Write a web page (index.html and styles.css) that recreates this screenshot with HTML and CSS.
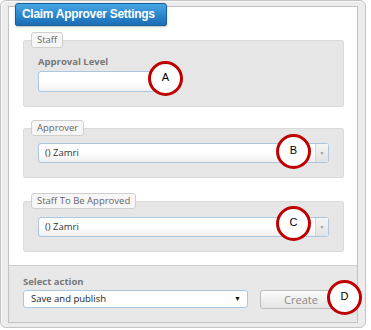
FILE: index.html
```html
<!DOCTYPE html>
<html>
<head>
<meta charset="utf-8">
<title>Claim Approver Settings</title>
<link rel="stylesheet" href="styles.css">
</head>
<body>
<div class="window">
	<div class="panel">
		<div class="tab">Claim Approver Settings</div>
		<div class="content">
			<fieldset class="group">
				<legend>Staff</legend>
				<div class="label">Approval Level</div>
				<div class="text-input"></div>
			</fieldset>
			<fieldset class="group gap">
				<legend>Approver</legend>
				<div class="combo"><span class="value">() Zamri</span><span class="drop">&#9660;</span></div>
			</fieldset>
			<fieldset class="group gap2">
				<legend>Staff To Be Approved</legend>
				<div class="combo"><span class="value">() Zamri</span><span class="drop">&#9660;</span></div>
			</fieldset>
		</div>
		<div class="footer">
			<div class="label">Select action</div>
			<div class="actions">
				<div class="select"><span>Save and publish</span><span class="arrow">&#9660;</span></div>
				<div class="button">Create</div>
			</div>
		</div>
	</div>
	<div class="mark mark-a">A</div>
	<div class="mark mark-b">B</div>
	<div class="mark mark-c">C</div>
	<div class="mark mark-d">D</div>
</div>
</body>
</html>
```

FILE: styles.css
```css
*{margin:0;padding:0;box-sizing:border-box;}
body{background:#fff;font-family:"Open Sans","Liberation Sans",sans-serif;}
.window{position:relative;width:366px;height:328px;background:#ececec;border:1px solid #c4c4c4;
	border-radius:6px;padding:5px 0 0 7px;box-shadow:inset 1px 1px 0 #fafafa;}
.panel{width:350px;height:317px;background:#fff;border:1px solid #c2c2c2;display:flex;flex-direction:column;}
.tab{align-self:flex-start;margin:-4px 0 0 6px;width:152px;height:23px;border:1px solid #1d5f98;border-radius:3px 3px 2px 2px;
	background:linear-gradient(#48a6e4,#2a86cc 55%,#1c6db4);color:#fff;font-family:"Liberation Sans",sans-serif;
	font-weight:bold;font-size:12px;letter-spacing:-0.3px;line-height:21px;padding-left:6px;white-space:nowrap;overflow:hidden;
	box-shadow:0 1px 2px rgba(0,0,0,0.25);}
.content{flex:1;}
.group{margin:6px 13px 0 14px;padding:0 14px 14px;border:1px solid #dadada;border-radius:3px;background:#e6e6e6;}
.group.gap{margin-top:13px;}
.group.gap2{margin-top:15px;}
.group legend{margin-left:-7px;height:16px;padding:0 5px;border:1px solid #cfcfcf;border-radius:3px;
	background:#f6f6f6;font-size:9.5px;line-height:14px;color:#666;}
.label{font-weight:bold;font-size:9.5px;line-height:14px;color:#777;}
.group .label{margin-top:7px;}
.text-input{margin-top:2px;width:122px;height:21px;border:1px solid #a9c8df;border-radius:3px;
	background:linear-gradient(#fff 50%,#f1f1f1);}
.combo{display:flex;margin-top:7px;width:291px;height:20px;border:1px solid #a9c8df;border-radius:3px;
	background:linear-gradient(#fff 50%,#eeeeee);font-size:9.5px;color:#333;}
.gap2 .combo{margin-top:8px;}
.combo .value{flex:1;line-height:18px;padding-left:6px;}
.combo .drop{width:13px;border-left:1px solid #c9d8e4;background:linear-gradient(#f4f4f4,#e2e2e2);
	font-size:5px;color:#999;text-align:center;line-height:18px;}
.footer{height:57px;background:#e8e8e8;border-top:1px solid #cfcfcf;padding:9px 14px 0;}
.actions{display:flex;align-items:flex-start;margin-top:1px;}
.select{display:flex;justify-content:space-between;width:225px;height:18px;border:1px solid #a9c8df;border-radius:3px;
	background:#fff;font-size:9.5px;color:#222;line-height:16px;padding:0 6px 0 7px;}
.select .arrow{font-size:7px;color:#111;}
.button{margin-left:12px;width:82px;height:19px;border:1px solid #bdbdbd;border-radius:3px;
	background:linear-gradient(#fbfbfb,#e4e4e4);font-size:11px;color:#8a8a8a;
	text-align:center;line-height:17px;}
.mark{position:absolute;width:35px;height:35px;border:3px solid #c00000;border-radius:50%;background:#fff;
	font-family:"Liberation Sans",sans-serif;font-size:11px;color:#000;text-align:center;line-height:27px;}
.mark-a{left:147px;top:60px;}
.mark-b{left:275px;top:133px;}
.mark-c{left:275px;top:205px;}
.mark-d{left:326px;top:279px;}
```
